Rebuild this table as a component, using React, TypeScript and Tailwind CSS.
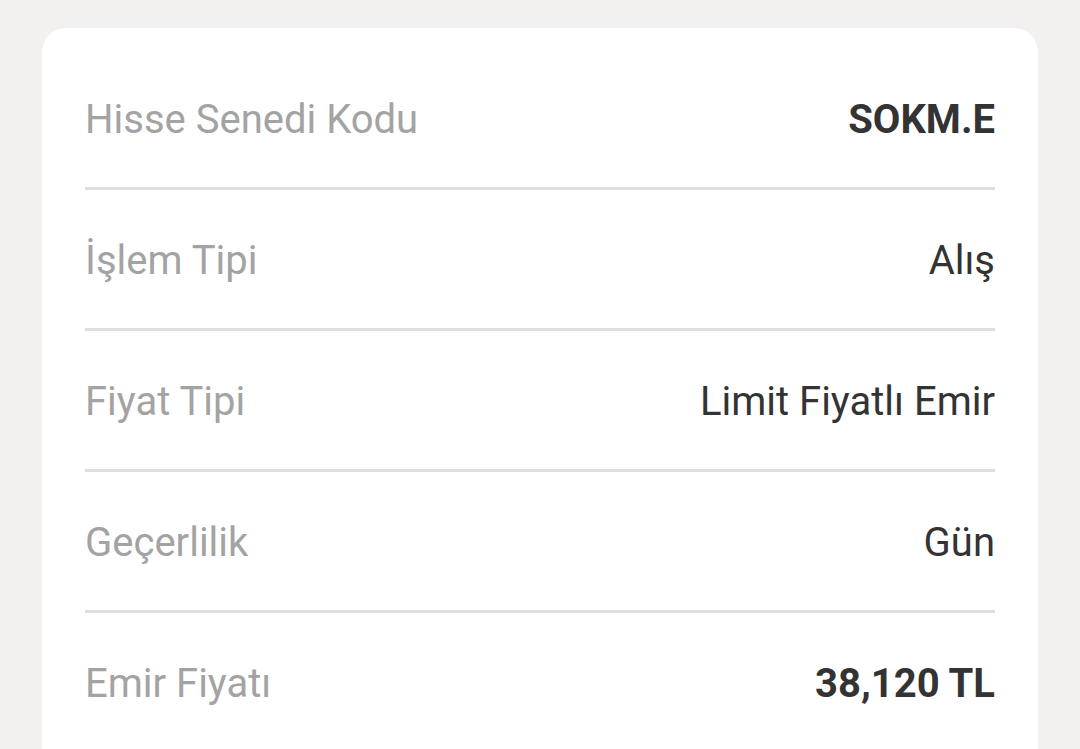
const rows = [
  { label: 'Hisse Senedi Kodu', value: 'SOKM.E', bold: true },
  { label: 'İşlem Tipi', value: 'Alış', bold: false },
  { label: 'Fiyat Tipi', value: 'Limit Fiyatlı Emir', bold: false },
  { label: 'Geçerlilik', value: 'Gün', bold: false },
  { label: 'Emir Fiyatı', value: '38,120 TL', bold: true },
];

const App = () => {
  return (
    <div className="h-[749px] overflow-hidden bg-[#f2f1ef] px-[42px] pt-[28px] font-['Roboto',sans-serif]">
      <div className="rounded-[24px] bg-white px-[43px] pt-[21px] pb-10">
        {rows.map((row, index) => (
          <div key={row.label}>
            {index > 0 && <div className="h-[3px] bg-[#dedede]" />}
            <div className="flex h-[138px] items-center justify-between pt-[4px]">
              <span className="text-[40px] text-[#a3a3a3]">{row.label}</span>
              <span
                className={`text-[40px] text-[#333333] ${row.bold ? 'font-bold' : 'font-normal'}`}
              >
                {row.value}
              </span>
            </div>
          </div>
        ))}
      </div>
    </div>
  );
};

export default App;
